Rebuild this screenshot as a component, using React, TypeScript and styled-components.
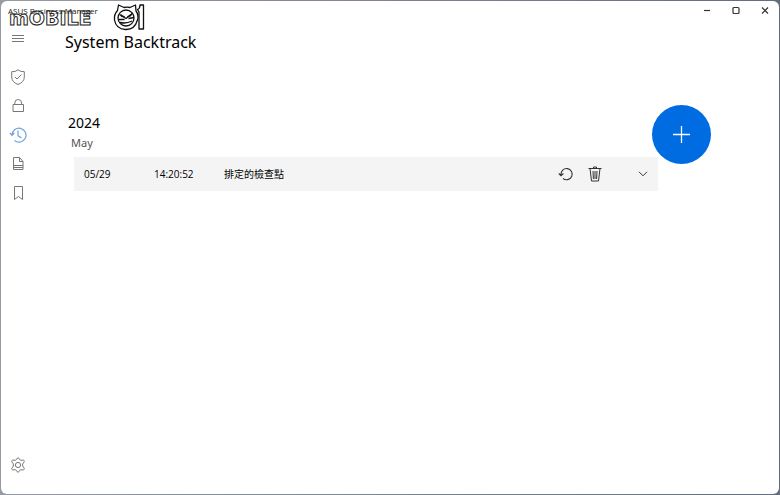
import React from "react";
import styled, { createGlobalStyle } from "styled-components";

const GlobalStyle = createGlobalStyle`
  * { box-sizing: border-box; }
  body {
    margin: 0;
    background: linear-gradient(90deg, #969ba5, #646d7b);
    font-family: "Noto Sans", "Noto Sans CJK TC", sans-serif;
    color: #000;
  }
  button, a { color: inherit; font: inherit; }
  svg { display: block; fill: none; stroke: currentColor; }
`;

const Window = styled.div`
  min-height: 100vh;
  display: flex;
  flex-direction: column;
  background: #fff;
  border: 1px solid transparent;
  background-clip: padding-box;
  border-radius: 7px;
`;

const TitleBar = styled.header`
  position: relative;
  height: 19px;
  display: flex;
  justify-content: space-between;
  align-items: center;
  padding-left: 7px;
`;

const AppName = styled.span`
  font-family: "Open Sans", sans-serif;
  font-size: 8px;
  line-height: 12px;
  color: #222;
`;

const Watermark = styled.svg`
  position: absolute;
  left: 7px;
  top: 2px;
  pointer-events: none;
`;

const Mark = styled.text`
  font: bold 19px "DejaVu Sans", sans-serif;
  fill: none;
  stroke: #222;
  stroke-width: 1;
`;

const Controls = styled.div`
  display: flex;
`;

const IconButton = styled.button<{ $w?: number; $h?: number }>`
  width: ${(p) => p.$w ?? 30}px;
  height: ${(p) => p.$h ?? 30}px;
  padding: 0;
  border: 0;
  background: none;
  display: flex;
  align-items: center;
  justify-content: center;
  color: #333;
`;

const Body = styled.div`
  flex: 1;
  display: flex;
`;

const Sidebar = styled.nav`
  width: 34px;
  display: flex;
  flex-direction: column;
  align-items: center;
  padding: 4px 0 14px;
`;

const NavList = styled.div`
  margin-top: 8px;
  flex: 1;
`;

const NavButton = styled(IconButton)<{ $active?: boolean }>`
  color: ${(p) => (p.$active ? "#6fa3dc" : "#777")};
`;

const Main = styled.main`
  flex: 1;
  padding: 9px 68px 0 30px;
`;

const PageTitle = styled.h1`
  margin: 0;
  font-size: 16px;
  line-height: 26px;
  font-weight: 400;
`;

const SectionHead = styled.div`
  display: flex;
  justify-content: space-between;
  align-items: flex-start;
  height: 52px;
  margin-top: 50px;
  padding-left: 3px;
`;

const Dates = styled.div`
  padding-top: 7px;
`;

const Year = styled.h2`
  margin: 0;
  font-size: 14px;
  line-height: 22px;
  font-weight: 400;
`;

const Month = styled.h3`
  margin: 0 0 0 3px;
  font-size: 11px;
  line-height: 18px;
  font-weight: 400;
  color: #555;
`;

const AddButton = styled.button`
  position: relative;
  width: 59px;
  height: 59px;
  border: 0;
  border-radius: 50%;
  padding: 0;
  background: #006ce2;
  color: #fff;
  display: flex;
  align-items: center;
  justify-content: center;
`;

const Table = styled.table`
  width: calc(100% - 62px);
  margin-left: 9px;
  border-collapse: collapse;
  table-layout: fixed;
  background: #f4f4f4;
`;

const Cell = styled.td<{ $w?: number }>`
  width: ${(p) => (p.$w ? `${p.$w}px` : "auto")};
  height: 34px;
  padding: 0 0 0 10px;
  font-family: "Open Sans", "Noto Sans CJK TC", sans-serif;
  font-size: 10px;
  line-height: 14px;
`;

const Actions = styled.div`
  display: flex;
`;

const ToggleSlot = styled.div`
  margin-left: 18px;
`;

function Logo() {
  return (
    <Watermark width="140" height="30" viewBox="0 0 140 30" aria-label="Mobile01">
      <Mark x="1" y="22">mOBILE</Mark>
      <g stroke="#111" strokeWidth="1.3" fill="#fff" strokeLinejoin="round">
        <path d="M109.500 7.500 110.500 2l5.500 2.500q3-.8 6 0L127.500 2l.5 6q3 4 1.500 9-3 10-12 9.500-9.500-.5-11-9.500-.7-5.500 3-9.500z" />
        <circle cx="118" cy="15" r="8" />
        <path d="m111.500 11.500 6.500 4 7-5.500M110.500 16.500h6m4-1 5.500-1M112 19.500q6 1.500 12-1.500" fill="none" />
        <path d="m113 11.500 4 2.500-4-.5zM119 14l4.500-3.200-.5 2.200z" fill="#111" strokeWidth=".5" />
        <path d="M129.500 6.500q2.500-1 2.500-4.500h3.500v24H131V9z" />
      </g>
    </Watermark>
  );
}

const shield = (
  <svg width="16" height="16" viewBox="0 0 16 16">
    <path d="M8 .8Q10.500 3 14.300 2.700V8q0 5-6.300 7.500Q1.700 13 1.700 8V2.700Q5.500 3 8 .8ZM5 8l2 2 4.500-4.500" />
  </svg>
);
const lock = (
  <svg width="16" height="16" viewBox="0 0 16 16">
    <path d="M3 6.500h10.500v7H3zM4.800 6.500V5q0-3.500 3.400-3.500T11.600 5v1.500" />
  </svg>
);
const history = (
  <svg width="18" height="18" viewBox="0 0 18 18">
    <path d="M3 9.300A7 7 0 1 1 5.500 14.500M.8 7 3 9.300 5.300 7M9 4.500v5.300l3.500 2" strokeWidth="1.200" />
  </svg>
);
const report = (
  <svg width="16" height="16" viewBox="0 0 16 16">
    <path d="M3.500 13.500v-12h6l3.500 4v8zM9.500 1.500v4H13M3.500 9.500H13M3.500 11.500H13" />
  </svg>
);
const bookmark = (
  <svg width="16" height="16" viewBox="0 0 16 16">
    <path d="M4.500 1.500h8v13l-4-3-4 3z" />
  </svg>
);

const navItems = [
  { label: "Security", icon: shield },
  { label: "Lock", icon: lock },
  { label: "System Backtrack", icon: history, active: true },
  { label: "Reports", icon: report },
  { label: "Bookmarks", icon: bookmark },
];

export default function App() {
  return (
    <>
      <GlobalStyle />
      <Window>
        <TitleBar>
          <AppName>ASUS Business Manager</AppName>
          <Logo />
          <Controls>
            <IconButton $w={29} $h={19} aria-label="Minimize">
              <svg width="9" height="9" viewBox="0 0 9 9"><path d="M2 4.500h6" strokeWidth="1.200" /></svg>
            </IconButton>
            <IconButton $w={29} $h={19} aria-label="Maximize">
              <svg width="9" height="9" viewBox="0 0 9 9"><rect x="2" y="1.500" width="6" height="6" rx="1" strokeWidth="1.200" /></svg>
            </IconButton>
            <IconButton $w={29} $h={19} aria-label="Close">
              <svg width="9" height="9" viewBox="0 0 9 9"><path d="m2 1.500 6 6m0-6-6 6" strokeWidth="1.200" /></svg>
            </IconButton>
          </Controls>
        </TitleBar>
        <Body>
          <Sidebar>
            <NavButton aria-label="Menu">
              <svg width="12" height="8" viewBox="0 0 12 8"><path d="M0 .5h12M0 3.500h12M0 6.500h12" /></svg>
            </NavButton>
            <NavList>
              {navItems.map((n) => (
                <NavButton key={n.label} $h={29} $active={n.active} aria-label={n.label}>
                  {n.icon}
                </NavButton>
              ))}
            </NavList>
            <NavButton aria-label="Settings">
              <svg width="16" height="16" viewBox="0 0 16 16" strokeLinejoin="round">
                <path d="M6.400 2.600Q7 .8 8 .8t1.600 1.800q1 1 2.500.6 1.600-.4 2.100.5t-.8 2.200q-.9 1-.9 2.100t.9 2.100q1.300 1.300.8 2.200t-2.100.5q-1.500-.4-2.500.6Q9 15.200 8 15.200t-1.600-1.800q-1-1-2.500-.6-1.600.4-2.100-.5t.8-2.200q.9-1 .9-2.100t-.9-2.100Q1.300 4.600 1.800 3.700t2.100-.5q1.500.4 2.500-.6Z" />
                <circle cx="8" cy="8" r="2.600" />
              </svg>
            </NavButton>
          </Sidebar>
          <Main>
            <PageTitle>System Backtrack</PageTitle>
            <SectionHead>
              <Dates>
                <Year>2024</Year>
                <Month>May</Month>
              </Dates>
              <AddButton aria-label="Add checkpoint">
                <svg width="17" height="17" viewBox="0 0 17 17"><path d="M8.500 0v17M0 8.500h17" strokeWidth="1.300" /></svg>
              </AddButton>
            </SectionHead>
            <Table>
              <tbody>
                <tr>
                  <Cell $w={70}>05/29</Cell>
                  <Cell $w={70}>14:20:52</Cell>
                  <Cell>排定的檢查點</Cell>
                  <Cell $w={117}>
                    <Actions>
                      <IconButton aria-label="Restore">
                        <svg width="16" height="16" viewBox="0 0 16 16">
                          <path d="M3 8.800A5.600 5.600 0 1 1 5 12.500M.8 7.500 3 9.700l2.400-2.200" strokeWidth="1.100" />
                        </svg>
                      </IconButton>
                      <IconButton aria-label="Delete">
                        <svg width="16" height="16" viewBox="0 0 16 16">
                          <path d="M1.500 2.500h13M6.500 2.500V1h3v1.500M3 2.500l1.500 12.500h7L13 2.500M6 5l.4 8M8 5v8M10 5l-.4 8" />
                        </svg>
                      </IconButton>
                      <ToggleSlot>
                        <IconButton aria-label="Expand">
                          <svg width="10" height="6" viewBox="0 0 10 6"><path d="m1 .8 4 4 4-4" /></svg>
                        </IconButton>
                      </ToggleSlot>
                    </Actions>
                  </Cell>
                </tr>
              </tbody>
            </Table>
          </Main>
        </Body>
      </Window>
    </>
  );
}
